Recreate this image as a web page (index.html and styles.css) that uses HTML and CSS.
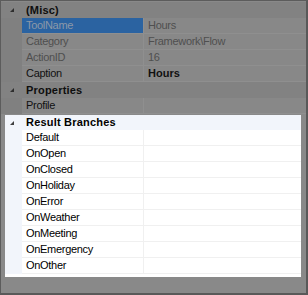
FILE: index.html
```html
<!DOCTYPE html>
<html lang="en">
<head>
    <meta charset="UTF-8">
    <title>Property Grid</title>
    <link rel="stylesheet" href="styles.css">
</head>
<body>
    <div class="grid">
        <div class="dim">
            <div class="cat">
                <span class="glyph"><svg width="4" height="4" viewBox="0 0 4 4"><polygon points="4,0 4,4 0,4"/></svg></span>
                <span class="cat-name">(Misc)</span>
            </div>
            <div class="row">
                <span class="gutter"></span>
                <span class="name selected">ToolName</span>
                <span class="value muted">Hours</span>
            </div>
            <div class="row">
                <span class="gutter"></span>
                <span class="name muted">Category</span>
                <span class="value muted">Framework\Flow</span>
            </div>
            <div class="row">
                <span class="gutter"></span>
                <span class="name muted">ActionID</span>
                <span class="value muted">16</span>
            </div>
            <div class="row">
                <span class="gutter"></span>
                <span class="name">Caption</span>
                <span class="value bold">Hours</span>
            </div>
            <div class="cat">
                <span class="glyph"><svg width="4" height="4" viewBox="0 0 4 4"><polygon points="4,0 4,4 0,4"/></svg></span>
                <span class="cat-name">Properties</span>
            </div>
            <div class="row">
                <span class="gutter"></span>
                <span class="name">Profile</span>
                <span class="value"></span>
            </div>
        </div>

        <div class="focus">
            <div class="cat">
                <span class="glyph"><svg width="4" height="4" viewBox="0 0 4 4"><polygon points="4,0 4,4 0,4"/></svg></span>
                <span class="cat-name">Result Branches</span>
            </div>
            <div id="branchList"></div>
        </div>
    </div>

    <script>
        const branches = ['Default', 'OnOpen', 'OnClosed', 'OnHoliday', 'OnError',
            'OnWeather', 'OnMeeting', 'OnEmergency', 'OnOther'];

        const list = document.getElementById('branchList');
        branches.forEach(name => {
            const row = document.createElement('div');
            row.className = 'row';
            row.innerHTML = `
                <span class="gutter"></span>
                <span class="name">${name}</span>
                <span class="value"></span>
            `;
            list.appendChild(row);
        });
    </script>
</body>
</html>
```

FILE: styles.css
```css
body {
    margin: 0;
    font-family: 'Liberation Sans', Arial, sans-serif;
    font-size: 11px;
    letter-spacing: -0.3px;
}

.grid {
    width: 308px;
    height: 295px;
    box-sizing: border-box;
    background: #898989;
    border-top: 1px solid #5c5c5c;
    border-left: 1px solid #5c5c5c;
    border-right: 2px solid #595959;
    border-bottom: 2px solid #595959;
    padding-top: 1px;
    overflow: hidden;
}

.cat {
    display: flex;
    align-items: center;
    height: 16px;
    line-height: 16px;
}

.glyph {
    width: 21px;
    display: flex;
    justify-content: flex-end;
    padding-right: 8px;
    box-sizing: border-box;
}

.glyph svg {
    display: block;
}

.cat-name {
    padding-left: 4px;
    font-weight: bold;
    letter-spacing: 0.2px;
}

.row {
    display: flex;
    height: 16px;
    line-height: 15px;
}

.gutter {
    width: 21px;
    flex-shrink: 0;
}

.name {
    width: 122px;
    flex-shrink: 0;
    padding-left: 4px;
    box-sizing: border-box;
    white-space: nowrap;
    overflow: hidden;
    border-bottom: 1px solid;
    border-right: 1px solid;
}

.value {
    flex: 1;
    padding-left: 4px;
    white-space: nowrap;
    border-bottom: 1px solid;
}

/* dimmed part of the grid */
.dim .cat {
    background: #828282;
    color: #0e0e0e;
}

.dim .glyph svg {
    fill: #2e2e2e;
}

.dim .gutter {
    background: #808080;
}

.dim .name, .dim .value {
    background: #888888;
    color: #111;
    border-color: #8f8f8f;
}

.dim .muted {
    color: #4f4f4f;
}

.dim .name.selected {
    background: #2b63a1;
    color: #8c98a8;
}

.bold {
    font-weight: bold;
    letter-spacing: 0;
}

/* highlighted part of the grid */
.focus {
    margin: 1px 5px 0 4px;
    padding-bottom: 3px;
    background: #ffffff;
}

.focus .cat {
    height: 15px;
    line-height: 15px;
    background: #f2f5fb;
    color: #000;
}

.focus .glyph {
    width: 17px;
    padding-right: 8px;
}

.focus .glyph svg {
    fill: #404040;
}

.focus .gutter {
    width: 17px;
    background: #f2f5fb;
}

.focus .name, .focus .value {
    color: #000;
    border-color: #f0f0f0;
}
```
